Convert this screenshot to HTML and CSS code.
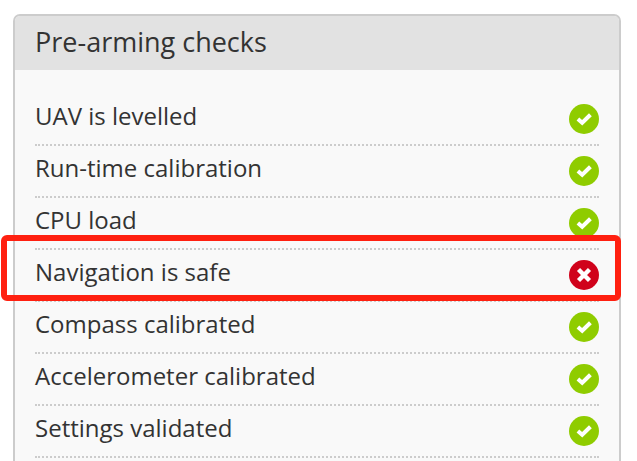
FILE: index.html
```html
<!DOCTYPE html>
<html>
<head>
<meta charset="utf-8">
<title>Pre-arming checks</title>
<link rel="stylesheet" href="styles.css">
</head>
<body>
<div class="panel">
  <div class="panel-heading">Pre-arming checks</div>
  <ul class="checks">
    <li><span>UAV is levelled</span><svg class="icon" viewBox="0 0 30 30"><circle cx="15" cy="15" r="15" fill="#8fcc00"/><path d="M8.9 15l4.3 3.8 8.2-8" fill="none" stroke="#fff" stroke-width="4"/></svg></li>
    <li><span>Run-time calibration</span><svg class="icon" viewBox="0 0 30 30"><circle cx="15" cy="15" r="15" fill="#8fcc00"/><path d="M8.9 15l4.3 3.8 8.2-8" fill="none" stroke="#fff" stroke-width="4"/></svg></li>
    <li><span>CPU load</span><svg class="icon" viewBox="0 0 30 30"><circle cx="15" cy="15" r="15" fill="#8fcc00"/><path d="M8.9 15l4.3 3.8 8.2-8" fill="none" stroke="#fff" stroke-width="4"/></svg></li>
    <li><span>Navigation is safe</span><svg class="icon" viewBox="0 0 30 30"><circle cx="15" cy="15" r="15" fill="#d0021b"/><path d="M9.5 9.5l11 11M20.5 9.5l-11 11" fill="none" stroke="#fff" stroke-width="4.4"/></svg></li>
    <li><span>Compass calibrated</span><svg class="icon" viewBox="0 0 30 30"><circle cx="15" cy="15" r="15" fill="#8fcc00"/><path d="M8.9 15l4.3 3.8 8.2-8" fill="none" stroke="#fff" stroke-width="4"/></svg></li>
    <li><span>Accelerometer calibrated</span><svg class="icon" viewBox="0 0 30 30"><circle cx="15" cy="15" r="15" fill="#8fcc00"/><path d="M8.9 15l4.3 3.8 8.2-8" fill="none" stroke="#fff" stroke-width="4"/></svg></li>
    <li><span>Settings validated</span><svg class="icon" viewBox="0 0 30 30"><circle cx="15" cy="15" r="15" fill="#8fcc00"/><path d="M8.9 15l4.3 3.8 8.2-8" fill="none" stroke="#fff" stroke-width="4"/></svg></li>
  </ul>
  <div class="highlight"></div>
</div>
</body>
</html>
```

FILE: styles.css
```css
html, body {
    margin: 0;
    height: 100%;
    overflow: hidden;
    background: #fff;
}

body {
    padding: 14px 16px 0 13px;
    box-sizing: border-box;
    font-family: "Open Sans", sans-serif;
    color: #333;
}

.panel {
    position: relative;
    height: 447px;
    background: #f9f9f9;
    border: 2px solid #ccc;
    border-bottom: 0;
    border-radius: 7px 7px 0 0;
}

.panel-heading {
    height: 54px;
    line-height: 51px;
    padding-left: 20px;
    background: #e2e2e2;
    border-radius: 5px 5px 0 0;
    font-size: 27px;
}

.checks {
    list-style: none;
    margin: 0;
    padding: 24px 20px 0 20px;
}

.checks li {
    display: flex;
    justify-content: space-between;
    align-items: center;
    height: 50px;
    border-bottom: 2px dotted #ccc;
    font-size: 24px;
}

.checks li span {
    padding-bottom: 7px;
}

.icon {
    width: 30px;
    height: 30px;
}

.highlight {
    position: absolute;
    left: -14px;
    top: 219px;
    width: 608px;
    height: 54px;
    border: 6px solid #ff2010;
    border-radius: 6px;
}
```
